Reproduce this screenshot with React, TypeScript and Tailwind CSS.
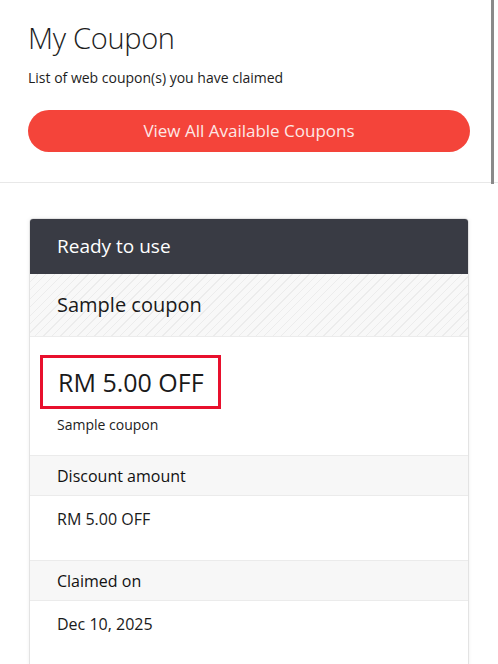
import React from 'react';

interface DetailRow {
  label: string;
  value: string;
}

const details: DetailRow[] = [
  { label: 'Discount amount', value: 'RM 5.00 OFF' },
  { label: 'Claimed on', value: 'Dec 10, 2025' },
];

const App: React.FC = () => {
  return (
    <div className="relative min-h-[664px] bg-white text-[#222] font-['Open_Sans','Noto_Sans',sans-serif] overflow-hidden">
      {/* fake scrollbar */}
      <div className="absolute right-[4px] top-0 h-[184px] w-[3px] bg-[#8a8a8a]" />

      {/* Header */}
      <div className="px-[28px] pt-[18px] pb-[30px] border-b border-[#e8e8e8]">
        <h1 className="text-[29px] leading-[40px] font-light text-[#1d1d1d] tracking-[-0.3px]">My Coupon</h1>
        <p className="mt-[10px] text-[14px] leading-[20px] text-[#1d1d1d]">List of web coupon(s) you have claimed</p>
        <button className="mt-[22px] w-full h-[42px] rounded-full bg-[#f4443a] text-[#fde8e6] text-[17px]">
          View All Available Coupons
        </button>
      </div>

      {/* Coupon card */}
      <div className="mx-[29px] mt-[35px] rounded-t-[4px] border border-[#e3e3e3] shadow-[0_0_4px_rgba(0,0,0,0.06)]">
        <div className="h-[55px] bg-[#393b44] rounded-t-[3px] px-[27px] flex items-center">
          <span className="text-white text-[19px]">Ready to use</span>
        </div>
        <div className="h-[63px] px-[27px] flex items-center border-b border-[#ececec] bg-[repeating-linear-gradient(135deg,#f8f8f8_0px,#f8f8f8_5px,#ececec_5px,#ececec_6px)]">
          <span className="text-[20px] text-[#1a1a1a]">Sample coupon</span>
        </div>
        <div className="pt-[18px] pb-[20px] px-[10px]">
          <div className="inline-block border-[3px] border-[#e8102d] pl-[15px] pr-[14px] py-[6px]">
            <span className="text-[25px] leading-[36px] text-[#1a1a1a]">RM 5.00 OFF</span>
          </div>
          <p className="mt-[5px] px-[17px] text-[14px] text-[#222]">Sample coupon</p>
        </div>
        {details.map((row) => (
          <div key={row.label}>
            <div className="h-[41px] px-[27px] flex items-center bg-[#f7f7f7] border-y border-[#ebebeb] text-[16px] font-medium text-[#111]">
              {row.label}
            </div>
            <div className="h-[64px] px-[27px] pt-[11px] text-[16px] text-[#1a1a1a]">{row.value}</div>
          </div>
        ))}
      </div>
    </div>
  );
};

export default App;
